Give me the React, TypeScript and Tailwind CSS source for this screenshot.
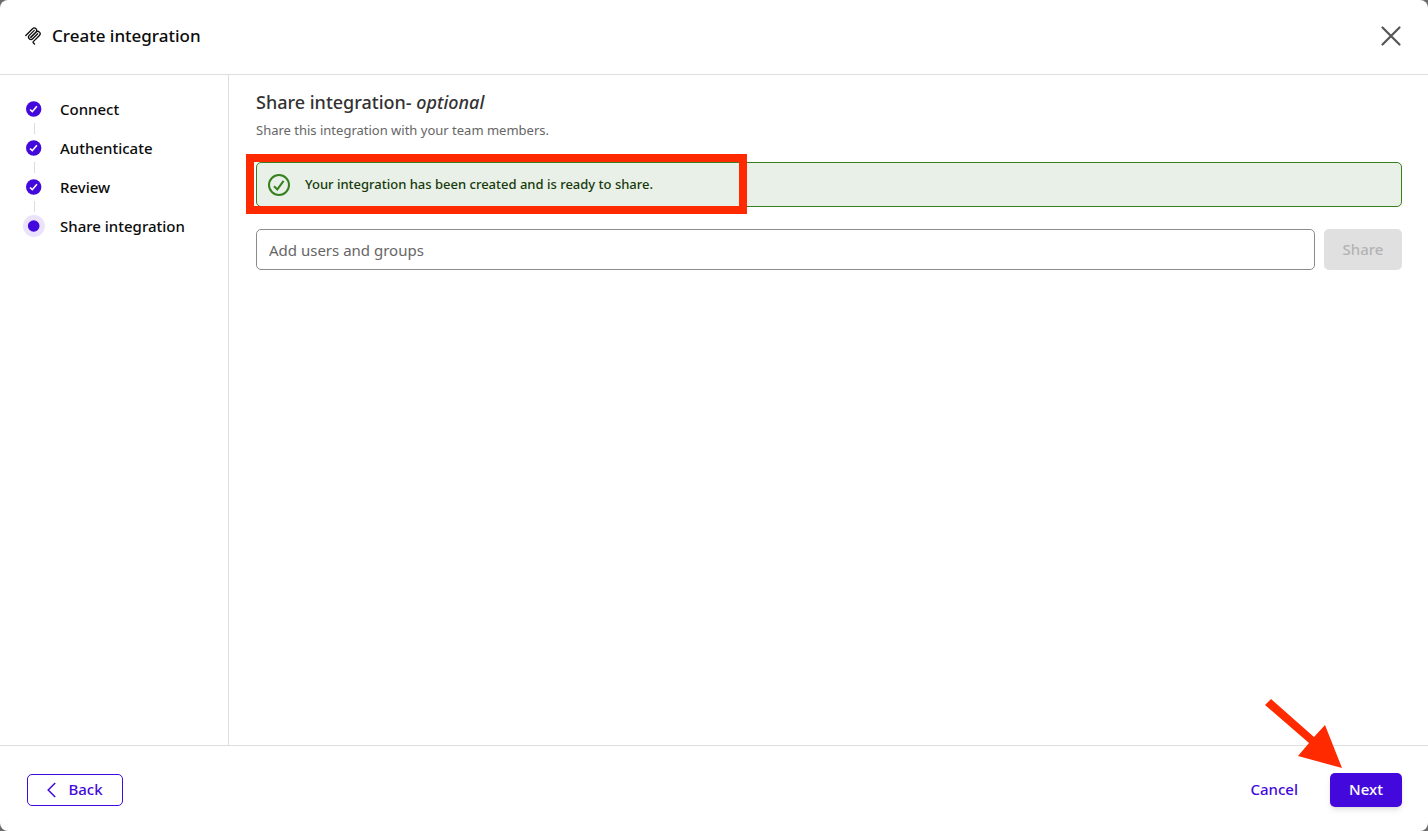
import React, { useState } from 'react'

interface Step {
  name: string
  done: boolean
}

const steps: Step[] = [
  { name: 'Connect', done: true },
  { name: 'Authenticate', done: true },
  { name: 'Review', done: true },
  { name: 'Share integration', done: false },
]

function McpIcon() {
  return (
    <svg viewBox="0 0 180 180" className="h-[18px] w-[18px]" fill="none" stroke="#0c0c0c" strokeWidth="13" strokeLinecap="round" aria-hidden="true">
      <path d="M18 84.85L85.88 16.97C95.25 7.6 110.45 7.6 119.82 16.97C129.2 26.34 129.2 41.54 119.82 50.91L68.56 102.18" />
      <path d="M69.27 101.47L119.82 50.91C129.2 41.54 144.39 41.54 153.77 50.91L154.12 51.27C163.49 60.64 163.49 75.83 154.12 85.21L92.72 146.6C89.6 149.72 89.6 154.79 92.72 157.91L105.33 170.52" />
      <path d="M102.85 33.94L52.65 84.15C43.28 93.52 43.28 108.71 52.65 118.09C62.02 127.46 77.22 127.46 86.59 118.09L136.79 67.88" />
    </svg>
  )
}

function StepMarker({ done }: { done: boolean }) {
  if (done) {
    return (
      <svg viewBox="0 0 22 22" className="h-[22px] w-[22px]" fill="none" aria-hidden="true">
        <circle cx="10.7" cy="11" r="7.7" fill="#4309dc" />
        <path d="M7 11.5l2.3 2.2 4.6-5.4" stroke="#fff" strokeWidth="1.6" />
      </svg>
    )
  }
  return (
    <svg viewBox="0 0 22 22" className="h-[22px] w-[22px]" aria-hidden="true">
      <circle cx="10.9" cy="11" r="11" fill="#ebe3fb" />
      <circle cx="10.7" cy="11" r="5.8" fill="#4309dc" />
    </svg>
  )
}

export default function App() {
  const [members, setMembers] = useState('')

  return (
    <div className="min-h-screen bg-[#6b6b6b] font-['Noto_Sans',sans-serif] text-[15px] text-[#0c0c0c]">
      <div className="flex min-h-screen flex-col rounded-lg bg-white">
        <header className="flex h-[75px] items-center justify-between border-b border-[#dedede] px-6 pb-0.5">
          <div className="flex items-center gap-2.5">
            <McpIcon />
            <h1 className="text-[17px] leading-6 font-medium">Create integration</h1>
          </div>
          <button type="button" aria-label="Close" className="p-1">
            <svg viewBox="0 0 18 18" className="h-[18px] w-[18px] overflow-visible" stroke="#555" strokeWidth="2.2" strokeLinecap="round" aria-hidden="true">
              <path d="M0.5 0.5l17 17M17.5 0.5l-17 17" />
            </svg>
          </button>
        </header>

        <div className="flex flex-1">
          <nav aria-label="Progress" className="w-[229px] shrink-0 border-r border-[#dedede] pt-[23px] pl-[23px]">
            <ol>
              {steps.map((step, i) => (
                <li key={step.name} aria-current={step.done ? undefined : 'step'}>
                  {i > 0 && (
                    <div className="flex h-[17px] w-[22px] items-center justify-center">
                      <span className="h-[11px] w-px bg-[#dcdcdc]" />
                    </div>
                  )}
                  <div className="flex h-[22px] items-center gap-[15px]">
                    <StepMarker done={step.done} />
                    <span className="font-medium">{step.name}</span>
                  </div>
                </li>
              ))}
            </ol>
          </nav>

          <main className="min-w-0 flex-1 pt-[15px] pr-[26px] pl-[27px]">
            <h2 className="text-lg leading-6 font-medium text-[#333]">
              Share integration- <em>optional</em>
            </h2>
            <p className="mt-1.5 text-[13px] leading-5 text-[#666]">Share this integration with your team members.</p>

            <div role="status" className="relative mt-[22px] flex h-[45px] items-center gap-[15px] rounded-[5px] border border-[#37801e] bg-[#e8f0e7] px-[11px]">
              <svg viewBox="0 0 22 22" className="h-[22px] w-[22px]" fill="none" stroke="#37801e" strokeWidth="2" aria-hidden="true">
                <circle cx="11" cy="11" r="10" />
                <path d="M6 12.2l3.3 3.2 6.3-8.6" />
              </svg>
              <span className="text-[13px] font-medium text-[#173a0c]">Your integration has been created and is ready to share.</span>
              {/* Callout around the message */}
              <div className="pointer-events-none absolute -top-[9px] -left-[11px] h-[60px] w-[501px] border-8 border-[#ff2a00]" />
            </div>

            <form className="mt-[22px] flex gap-[9px]" onSubmit={(e) => e.preventDefault()}>
              <input
                type="text"
                aria-label="Add users and groups"
                placeholder="Add users and groups"
                value={members}
                onChange={(e) => setMembers(e.target.value)}
                className="h-[41px] min-w-0 flex-1 rounded-[5px] border border-[#8c8c8c] px-3 placeholder:text-[#666]"
              />
              <button type="submit" disabled className="h-[41px] w-[78px] rounded-[5px] bg-[#e0e0e0] font-medium text-[#b3b3b3]">
                Share
              </button>
            </form>
          </main>
        </div>

        <footer className="flex h-[86px] items-center justify-between border-t border-[#dedede] pt-0.5 pr-[26px] pl-[27px]">
          <button type="button" className="flex h-8 w-[96px] items-center justify-center gap-3 rounded-[5px] border border-[#4309dc] font-medium text-[#4309dc]">
            <svg viewBox="0 0 9 16" className="h-4 w-[9px]" fill="none" stroke="currentColor" strokeWidth="1.5" aria-hidden="true">
              <path d="M8.2 1L1.2 8l7 7" />
            </svg>
            Back
          </button>
          <div className="flex items-center gap-8">
            <button type="button" className="font-medium text-[#4309dc]">Cancel</button>
            <div className="relative">
              <button type="button" className="block h-[34px] w-[72px] rounded-[5px] bg-[#4309dc] font-medium text-white shadow-md">
                Next
              </button>
              {/* Arrow pointing at the next button */}
              <svg viewBox="0 0 78 70" className="pointer-events-none absolute -top-[74px] -left-[66px] h-[70px] w-[78px]" fill="#ff2a00" aria-hidden="true">
                <path d="M7 0L50 38 61 26 78 69 34 57 45 44 1 6z" />
              </svg>
            </div>
          </div>
        </footer>
      </div>
    </div>
  )
}
